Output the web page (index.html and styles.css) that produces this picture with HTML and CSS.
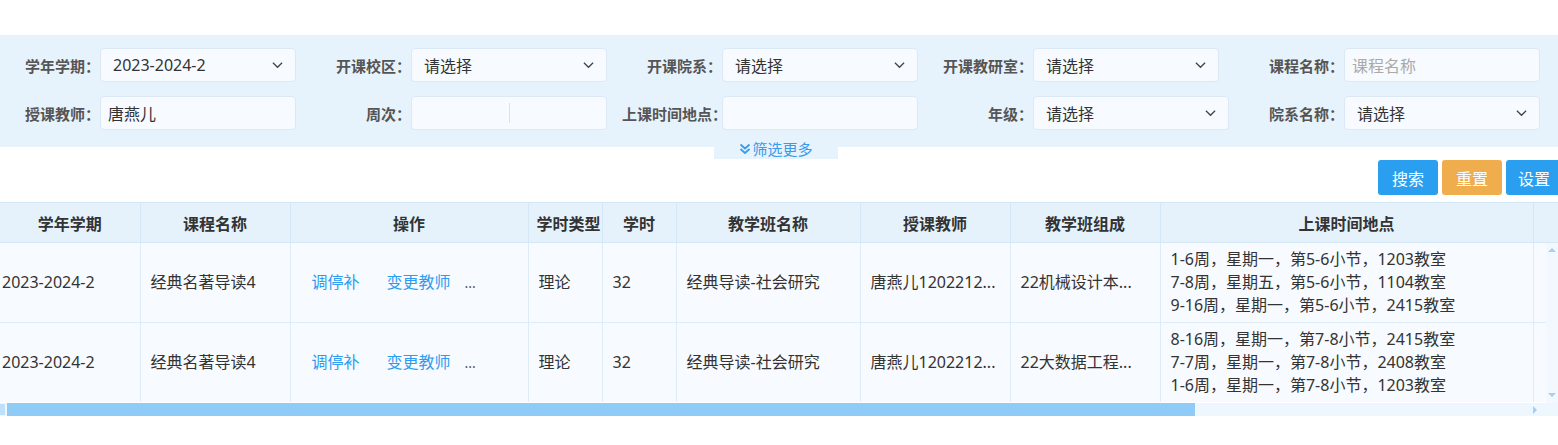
FILE: index.html
```html
<!DOCTYPE html>
<html lang="zh-CN">
<head>
    <meta charset="UTF-8">
    <title>教学班查询</title>
    <link rel="stylesheet" href="styles.css">
</head>
<body>
    <div class="filter-panel">
        <div class="filter-row">
            <div class="field">
                <label>学年学期：</label>
                <div class="select">2023-2024-2<svg class="chev" viewBox="0 0 12 8"><path d="M1 1.5 L6 6.5 L11 1.5"/></svg></div>
            </div>
            <div class="field">
                <label>开课校区：</label>
                <div class="select">请选择<svg class="chev" viewBox="0 0 12 8"><path d="M1 1.5 L6 6.5 L11 1.5"/></svg></div>
            </div>
            <div class="field">
                <label>开课院系：</label>
                <div class="select">请选择<svg class="chev" viewBox="0 0 12 8"><path d="M1 1.5 L6 6.5 L11 1.5"/></svg></div>
            </div>
            <div class="field">
                <label>开课教研室：</label>
                <div class="select narrow">请选择<svg class="chev" viewBox="0 0 12 8"><path d="M1 1.5 L6 6.5 L11 1.5"/></svg></div>
            </div>
            <div class="field">
                <label>课程名称：</label>
                <div class="input placeholder">课程名称</div>
            </div>
        </div>
        <div class="filter-row">
            <div class="field">
                <label>授课教师：</label>
                <div class="input text-in">唐燕儿</div>
            </div>
            <div class="field">
                <label>周次：</label>
                <div class="input range"><span></span><i class="divider"></i><span></span></div>
            </div>
            <div class="field">
                <label>上课时间地点：</label>
                <div class="input"></div>
            </div>
            <div class="field">
                <label>年级：</label>
                <div class="select">请选择<svg class="chev" viewBox="0 0 12 8"><path d="M1 1.5 L6 6.5 L11 1.5"/></svg></div>
            </div>
            <div class="field">
                <label>院系名称：</label>
                <div class="select">请选择<svg class="chev" viewBox="0 0 12 8"><path d="M1 1.5 L6 6.5 L11 1.5"/></svg></div>
            </div>
        </div>
    </div>
    <div class="more-wrap">
        <div class="more-tab"><svg class="dbl" viewBox="0 0 12 12"><path d="M1.5 1.5 L6 5.5 L10.5 1.5 M1.5 6 L6 10 L10.5 6"/></svg>筛选更多</div>
    </div>

    <div class="toolbar">
        <button class="btn blue">搜索</button>
        <button class="btn orange">重置</button>
        <button class="btn blue last">设置</button>
    </div>

    <div class="grid-wrap">
        <table class="grid">
            <colgroup>
                <col style="width:140px"><col style="width:150px"><col style="width:238px">
                <col style="width:74px"><col style="width:74px"><col style="width:184px">
                <col style="width:150px"><col style="width:150px"><col style="width:373px">
                <col style="width:120px">
            </colgroup>
            <thead>
                <tr>
                    <th>学年学期</th><th>课程名称</th><th>操作</th><th class="clip">学时类型</th><th>学时</th>
                    <th>教学班名称</th><th>授课教师</th><th>教学班组成</th><th>上课时间地点</th><th></th>
                </tr>
            </thead>
            <tbody>
                <tr>
                    <td class="first">2023-2024-2</td>
                    <td>经典名著导读4</td>
                    <td class="ops"><a>调停补</a><a>变更教师</a><span class="dots">...</span></td>
                    <td>理论</td>
                    <td>32</td>
                    <td>经典导读-社会研究</td>
                    <td>唐燕儿1202212...</td>
                    <td>22机械设计本...</td>
                    <td class="times">1-6周，星期一，第5-6小节，1203教室<br>7-8周，星期五，第5-6小节，1104教室<br>9-16周，星期一，第5-6小节，2415教室</td>
                    <td class="tail">人文</td>
                </tr>
                <tr>
                    <td class="first">2023-2024-2</td>
                    <td>经典名著导读4</td>
                    <td class="ops"><a>调停补</a><a>变更教师</a><span class="dots">...</span></td>
                    <td>理论</td>
                    <td>32</td>
                    <td>经典导读-社会研究</td>
                    <td>唐燕儿1202212...</td>
                    <td>22大数据工程...</td>
                    <td class="times">8-16周，星期一，第7-8小节，2415教室<br>7-7周，星期一，第7-8小节，2408教室<br>1-6周，星期一，第7-8小节，1203教室</td>
                    <td class="tail">人文</td>
                </tr>
            </tbody>
        </table>
        <div class="vscroll">
            <span class="arr up"></span>
            <span class="arr down"></span>
        </div>
        <div class="hscroll">
            <span class="harr left"></span>
            <div class="thumb"></div>
            <span class="harr right"></span>
        </div>
    </div>
</body>
</html>
```

FILE: styles.css
```css
body {
    margin: 0;
    padding-top: 35px;
    background: #fff;
    font-family: "Noto Sans", "Noto Sans CJK SC", sans-serif;
    font-size: 16px;
    color: #333;
    width: 1558px;
    overflow: hidden;
}
.filter-panel {
    background: #e6f3fd;
    padding: 13px 0 17px;
    display: flex;
    flex-direction: column;
    gap: 14px;
}
.filter-row {
    display: flex;
}
.field {
    width: 311px;
    display: flex;
    align-items: center;
}
.field label {
    width: 100px;
    flex-shrink: 0;
    text-align: right;
    font-weight: bold;
    font-size: 15px;
    color: #555;
    white-space: nowrap;
}
.select, .input {
    width: 196px;
    height: 34px;
    box-sizing: border-box;
    background: #f7faff;
    border: 1px solid #dbe9f6;
    border-radius: 4px;
    display: flex;
    align-items: center;
    padding: 0 12px;
    color: #333;
}
.select.narrow {
    width: 186px;
}
.select {
    justify-content: space-between;
}
.chev {
    width: 11px;
    height: 8px;
    fill: none;
    stroke: #444;
    stroke-width: 1.4;
}
.input.placeholder {
    color: #aaa;
    padding-left: 7px;
}
.input.text-in {
    padding-left: 7px;
}
.input.range {
    padding: 0;
}
.input.range span {
    flex: 1;
}
.divider {
    width: 1px;
    height: 20px;
    background: #d4e4f2;
}
.more-wrap {
    margin-left: 714px;
    width: 124px;
}
.more-tab {
    width: 124px;
    height: 12px;
    background: #e6f3fd;
    color: #3a9bea;
    font-size: 15px;
    line-height: 4px;
    display: flex;
    justify-content: center;
    align-items: flex-start;
}
.dbl {
    width: 12px;
    height: 12px;
    fill: none;
    stroke: #3a9bea;
    stroke-width: 1.8;
    margin-top: -4px;
    margin-right: 1px;
}
.toolbar {
    display: flex;
    justify-content: flex-end;
    gap: 4px;
    margin-top: 1px;
    margin-right: -4px;
    height: 35px;
}
.btn {
    border: none;
    height: 35px;
    width: 60px;
    border-radius: 3px;
    color: #fff;
    font-family: inherit;
    font-size: 16px;
    padding: 0;
}
.btn.blue {
    background: #2a9ff0;
}
.btn.orange {
    background: #f0ad4e;
}
.btn.last {
    width: 56px;
    border-radius: 3px 0 0 3px;
}
.grid-wrap {
    position: relative;
    margin-top: 7px;
    width: 1558px;
    overflow: hidden;
}
.grid {
    border-collapse: collapse;
    table-layout: fixed;
    width: 1653px;
}
.grid th {
    height: 39px;
    background: #e5f2fc;
    border-top: 1px solid #d3e7f7;
    border-bottom: 1px solid #d3e7f7;
    border-right: 1px solid #d3e7f7;
    font-weight: bold;
    color: #333;
    white-space: nowrap;
    overflow: hidden;
    padding: 0;
}
.grid th.clip {
    text-align: left;
    padding-left: 8px;
}
.grid td {
    height: 79px;
    background: #f7fafe;
    border-bottom: 1px solid #deecf8;
    border-right: 1px solid #deecf8;
    padding: 0 10px;
    vertical-align: middle;
    white-space: nowrap;
    overflow: hidden;
    line-height: 23px;
}
.grid tr:last-child td {
    border-bottom: none;
}
.grid td.first {
    padding-left: 2px;
}
.grid td.tail {
    padding-left: 12px;
}
.ops {
    padding-left: 21px !important;
}
.ops a {
    color: #2d9cf0;
    margin-right: 27px;
}
.ops .dots {
    margin-left: -13px;
    color: #555;
    font-size: 14px;
}
.vscroll {
    position: absolute;
    right: 0;
    top: 41px;
    width: 12px;
    height: 160px;
    background: #f3f8fe;
}
.arr {
    position: absolute;
    left: 2px;
    width: 0;
    height: 0;
    border-left: 4px solid transparent;
    border-right: 4px solid transparent;
}
.arr.up {
    top: 5px;
    border-bottom: 4px solid #9fd0f5;
}
.arr.down {
    bottom: 6px;
    border-top: 4px solid #9fd0f5;
}
.hscroll {
    display: flex;
    align-items: center;
    height: 13px;
    background: #eef6fe;
    margin-top: 1px;
}
.harr.left {
    width: 5px;
    height: 11px;
    background: #bfe0fa;
    margin-right: 2px;
}
.thumb {
    width: 1188px;
    height: 13px;
    background: #8ecbf7;
}
.harr.right {
    margin-left: 338px;
    width: 0;
    height: 0;
    border-top: 4px solid transparent;
    border-bottom: 4px solid transparent;
    border-left: 4px solid #9fd0f5;
}
```
